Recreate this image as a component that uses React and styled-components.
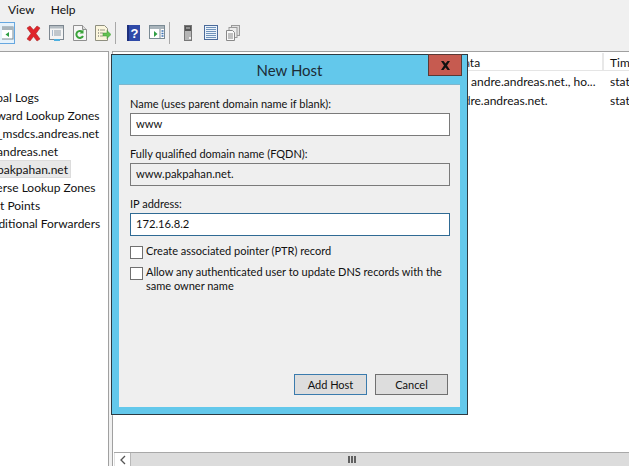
import React from "react";
import styled, { createGlobalStyle } from "styled-components";

const FONT = `"Lato", "Noto Sans", sans-serif`;

const Global = createGlobalStyle`
  html, body { margin: 0; padding: 0; width: 629px; height: 466px; overflow: hidden; background: #f0f0f0; }
  * { box-sizing: border-box; }
  body { font-family: ${FONT}; font-size: 12px; color: #111; }
`;

const Win = styled.div`
  position: relative;
  width: 629px;
  height: 466px;
  display: flex;
  flex-direction: column;
  overflow: hidden;
`;
const MenuBar = styled.div`
  height: 18px;
  display: flex;
  gap: 16px;
  padding-left: 8px;
  padding-top: 1px;
  align-items: center;
`;
const MenuItem = styled.span`
  font-size: 12px;
  line-height: 18px;
`;
const Toolbar = styled.div`
  height: 32px;
  display: flex;
  align-items: flex-start;
  padding-top: 4px;
  margin-bottom: 1px;
`;
const ToolIcon = styled.svg`
  flex: none;
  display: block;
  margin-left: ${(p) => p.$gap}px;
  margin-top: 3px;
`;
const ActiveTool = styled.div`
  flex: none;
  width: 15px;
  height: 22px;
  background: #e6f2fb;
  border: 1px solid #66a7e0;
  border-left: none;
  display: flex;
  align-items: center;
  justify-content: flex-end;
  overflow: hidden;
`;
const ToolSep = styled.div`
  flex: none;
  width: 1px;
  height: 22px;
  background: #a8a8a8;
  margin-left: ${(p) => p.$gap}px;
`;
const Body = styled.div`
  flex: 1;
  display: flex;
  min-height: 0;
  gap: 3px;
`;
const Tree = styled.div`
  width: 109px;
  flex: none;
  background: #fff;
  border-top: 1px solid #a0a0a0;
  border-right: 1px solid #a0a0a0;
  padding-top: 36px;
  overflow: hidden;
`;
const TreeRow = styled.div`
  height: 18px;
  white-space: nowrap;
  font-size: 12px;
  margin-left: ${(p) => p.$offset}px;
`;
const TreeLabel = styled.span`
  display: inline-block;
  height: 18px;
  line-height: 20px;
  vertical-align: top;
  padding-right: 3px;
  background: ${(p) => (p.$selected ? "#e8e8e8" : "transparent")};
  box-shadow: ${(p) => (p.$selected ? "inset 0 0 0 1px #dcdcdc" : "none")};
`;
const Pane = styled.div`
  flex: 1;
  min-width: 0;
  background: #fff;
  border-top: 1px solid #a0a0a0;
  border-left: 1px solid #a0a0a0;
  display: flex;
  flex-direction: column;
`;
const Header = styled.div`
  margin-top: 1px;
  height: 18px;
  display: grid;
  grid-template-columns: 336px 155px 1fr;
  border-bottom: 1px solid #e5e5e5;
`;
const HeadCell = styled.div`
  grid-column: ${(p) => p.$col};
  font-size: 12px;
  line-height: 19px;
  padding-left: 6px;
  overflow: hidden;
  border-right: 2px solid #e8e8e8;
  &:last-child { border-right: none; }
`;
const Rows = styled.div`
  flex: 1;
  padding-top: 1px;
`;
const Row = styled.div`
  height: 19px;
  display: grid;
  grid-template-columns: 338px 159px 1fr;
  font-size: 12px;
  line-height: 19px;
`;
const Cell = styled.div`
  grid-column: ${(p) => p.$col};
  white-space: nowrap;
  overflow: hidden;
`;
const ScrollBar = styled.div`
  height: 14px;
  margin-left: 1px;
  border-top: 1px solid #a8a8a8;
  display: flex;
  background: #dcdcdc;
`;
const ScrollBtn = styled.div`
  width: 17px;
  background: #fff;
  border-right: 1px solid #b8b8b8;
  border-left: 1px solid #e0e0e0;
  display: flex;
  align-items: center;
  justify-content: center;
`;
const Thumb = styled.div`
  flex: 1;
  display: flex;
  align-items: center;
  justify-content: center;
  gap: 1px;
  padding-right: 56px;
`;
const Grip = styled.i`
  display: block;
  width: 2px;
  height: 7px;
  background: #606060;
`;

const Dialog = styled.div`
  position: absolute;
  left: 111px;
  top: 54px;
  width: 357px;
  height: 361px;
  background: #63c8eb;
  border: 1px solid #2d3a42;
  padding: 30px 7px 7px;
  box-shadow: 0 0 0 1px rgba(255, 255, 255, 0.25);
`;
const Title = styled.div`
  position: absolute;
  left: 0;
  right: 0;
  top: 4px;
  text-align: center;
  font-size: 15px;
  line-height: 22px;
  color: #1c2c36;
`;
const CloseBtn = styled.div`
  position: absolute;
  top: -1px;
  right: 5px;
  width: 34px;
  height: 22px;
  background: #c65b50;
  border: 1px solid #5a3a36;
  display: flex;
  align-items: center;
  justify-content: center;
`;
const Panel = styled.div`
  height: 100%;
  background: #efefef;
  padding: 10px 11px 12px;
  display: flex;
  flex-direction: column;
  box-shadow: 0 -1px 0 #7fb6cc;
`;
const Label = styled.div`
  font-size: 11px;
  line-height: 18px;
  margin-top: ${(p) => p.$top || 0}px;
  margin-bottom: -2px;
`;
const Field = styled.div`
  width: 320px;
  height: 23px;
  margin-top: 2px;
  padding-left: 5px;
  font-size: 11.2px;
  line-height: 19px;
  background: ${(p) => (p.$readOnly ? "#efefef" : "#fff")};
  border: 1px solid ${(p) => (p.$focus ? "#2f6a94" : "#7a7a7a")};
`;
const Check = styled.div`
  display: flex;
  align-items: flex-start;
  gap: 3px;
  margin-top: ${(p) => p.$top}px;
`;
const Box = styled.div`
  flex: none;
  width: 13px;
  height: 13px;
  background: #fff;
  border: 1px solid #707070;
`;
const CheckText = styled.div`
  width: 304px;
  margin-top: -2px;
  font-size: 11px;
  line-height: 13.5px;
`;
const Buttons = styled.div`
  margin-top: auto;
  display: flex;
  justify-content: flex-end;
  gap: 8px;
  padding-right: 1px;
`;
const Button = styled.div`
  width: 73px;
  height: 21px;
  background: #dddddd;
  border: 1px solid ${(p) => (p.$primary ? "#3a7bad" : "#707070")};
  font-size: 11px;
  line-height: 19px;
  text-align: center;
`;

const Sv = ({ w = 16, h = 18, gap, children }) => (
  <ToolIcon $gap={gap} width={w} height={h} viewBox={`0 0 ${w} ${h}`}>{children}</ToolIcon>
);

const treeItems = [
  ["Global Logs", -22],
  ["Forward Lookup Zones", -21],
  ["_msdcs.andreas.net", -3],
  ["andreas.net", -3],
  ["pakpahan.net", -3, true],
  ["Reverse Lookup Zones", -23],
  ["Trust Points", -22],
  ["Conditional Forwarders", -23],
];

export default function App() {
  return (
    <Win>
      <Global />
      <MenuBar>
        <MenuItem>View</MenuItem>
        <MenuItem>Help</MenuItem>
      </MenuBar>
      <Toolbar>
        <ActiveTool>
          <svg width="12" height="14" viewBox="0 0 12 14">
            <rect x="-3" y="1" width="14" height="12" fill="#fff" stroke="#7a8a94" />
            <rect x="-3" y="1" width="14" height="3" fill="#a9b4bb" />
            <path d="M7 6v5L3.500 8.500z" fill="#2f9e44" />
          </svg>
        </ActiveTool>
        <Sv gap={10} w={17} h={17}>
          <path d="M2 3l3-2 3.500 4L12 1l3 2-4 5.500 4 5.500-3 2-3.500-4.500L5 16l-3-2 4-5.500z" fill="#e0242a" stroke="#a82a2a" strokeWidth=".6" />
        </Sv>
        <Sv gap={7} w={15} h={16}>
          <rect x=".5" y=".5" width="14" height="14" fill="#f4f4f4" stroke="#7d8790" />
          <rect x="1" y="1" width="13" height="2.500" fill="#b4bcc2" />
          <path d="M5 6h7M5 8h7M5 10h7" stroke="#8d99a3" />
          <path d="M3 6h1M3 8h1M3 10h1" stroke="#5b7fa5" />
          <rect x="5" y="14" width="6" height="2" fill="#4db0e0" />
        </Sv>
        <Sv gap={9} w={14} h={16}>
          <path d="M.5.5h9l4 4v11H.5z" fill="#f6f6f6" stroke="#8f8f8f" />
          <path d="M9.500.5v4h4" fill="#ddd" stroke="#8f8f8f" />
          <path d="M10 11a3.500 3.500 0 1 1-.6-4" fill="none" stroke="#3aa33a" strokeWidth="2" />
          <path d="M10.500 4.500v4h-4z" fill="#3aa33a" />
        </Sv>
        <Sv gap={8} w={16} h={16}>
          <path d="M.5.5h9l3 3v12H.5z" fill="#fbf6dd" stroke="#8f8f80" />
          <path d="M3 5h1M3 8h1M3 11h1" stroke="#555" />
          <path d="M5 5h5M5 8h3M5 11h3" stroke="#9a9a88" />
          <path d="M8 8h4V5.500L16 9.500 12 13.500V11H8z" fill="#62c24f" stroke="#3f8f35" strokeWidth=".5" />
        </Sv>
        <ToolSep $gap={4} />
        <Sv gap={11} w={13} h={16}>
          <rect width="13" height="16" fill="#2f4aa8" />
          <rect x="0" y="0" width="2" height="16" fill="#1d2f7c" />
          <text x="7.500" y="13" fontSize="13" fontWeight="700" fontFamily="Liberation Sans" textAnchor="middle" fill="#fff">?</text>
        </Sv>
        <Sv gap={9} w={16} h={15}>
          <rect x=".5" y=".5" width="15" height="13" fill="#fff" stroke="#7a8a94" />
          <rect x="1" y="1" width="14" height="3" fill="#a9b4bb" />
          <path d="M5 6v6l3.500-3z" fill="#2f9e44" />
          <rect x="10.500" y="4" width="1" height="10" fill="#7a8a94" />
          <path d="M12.500 6h2M12.500 8.500h2M12.500 11h2" stroke="#3b6fb0" strokeWidth="1.500" />
        </Sv>
        <ToolSep $gap={4} />
        <Sv gap={14} w={8} h={17}>
          <rect x=".5" y=".5" width="7" height="15" fill="#b5b5b5" stroke="#777" />
          <rect x="1" y="1" width="6" height="5" fill="#555" />
          <path d="M2 3h4" stroke="#ccc" />
          <rect x="5" y="12" width="2" height="2" fill="#eee" />
        </Sv>
        <Sv gap={12} w={14} h={16}>
          <rect x=".5" y=".5" width="13" height="14" fill="#eaf2fb" stroke="#4a6a9a" />
          <path d="M2 2.500h10M2 4.500h10M2 6.500h10M2 8.500h10M2 10.500h10M2 12.500h10" stroke="#6f92ba" />
        </Sv>
        <Sv gap={8} w={14} h={16}>
          <rect x="5.500" y=".5" width="8" height="10" fill="#e0e0e0" stroke="#999" />
          <rect x="3" y="2.500" width="8" height="10" fill="#ececec" stroke="#999" />
          <path d="M.5 5.500h6l2 2v8h-8z" fill="#f8f8f8" stroke="#888" />
          <path d="M2 9h5M2 11h5M2 13h5" stroke="#888" />
        </Sv>
      </Toolbar>
      <Body>
        <Tree>
          {treeItems.map(([t, o, s]) => (
            <TreeRow key={t} $offset={o}>
              <TreeLabel $selected={s}>{t}</TreeLabel>
            </TreeRow>
          ))}
        </Tree>
        <Pane>
          <Header>
            <HeadCell $col={2}>Data</HeadCell>
            <HeadCell $col={3}>Timestamp</HeadCell>
          </Header>
          <Rows>
            <Row>
              <Cell $col={2}>[1], andre.andreas.net., ho...</Cell>
              <Cell $col={3}>static</Cell>
            </Row>
            <Row>
              <Cell $col={2}>andre.andreas.net.</Cell>
              <Cell $col={3}>static</Cell>
            </Row>
          </Rows>
          <ScrollBar>
            <ScrollBtn>
              <svg width="8" height="10" viewBox="0 0 8 10"><path d="M6 1L2 5l4 4" fill="none" stroke="#555" strokeWidth="1.300" /></svg>
            </ScrollBtn>
            <Thumb><Grip /><Grip /><Grip /></Thumb>
          </ScrollBar>
        </Pane>
      </Body>
      <Dialog>
        <Title>New Host</Title>
        <CloseBtn>
          <svg width="11" height="9" viewBox="0 0 11 9"><path d="M1 0h2.500l2 2.500L7.500 0H10L7 4.500 10 9H7.500l-2-2.500L3.500 9H1l3-4.500z" fill="#111" /></svg>
        </CloseBtn>
        <Panel>
          <Label>Name (uses parent domain name if blank):</Label>
          <Field>www</Field>
          <Label $top={9}>Fully qualified domain name (FQDN):</Label>
          <Field $readOnly>www.pakpahan.net.</Field>
          <Label $top={9}>IP address:</Label>
          <Field $focus>172.16.8.2</Field>
          <Check $top={10}><Box /><CheckText>Create associated pointer (PTR) record</CheckText></Check>
          <Check $top={8}><Box /><CheckText>Allow any authenticated user to update DNS records with the same owner name</CheckText></Check>
          <Buttons>
            <Button $primary>Add Host</Button>
            <Button>Cancel</Button>
          </Buttons>
        </Panel>
      </Dialog>
    </Win>
  );
}
